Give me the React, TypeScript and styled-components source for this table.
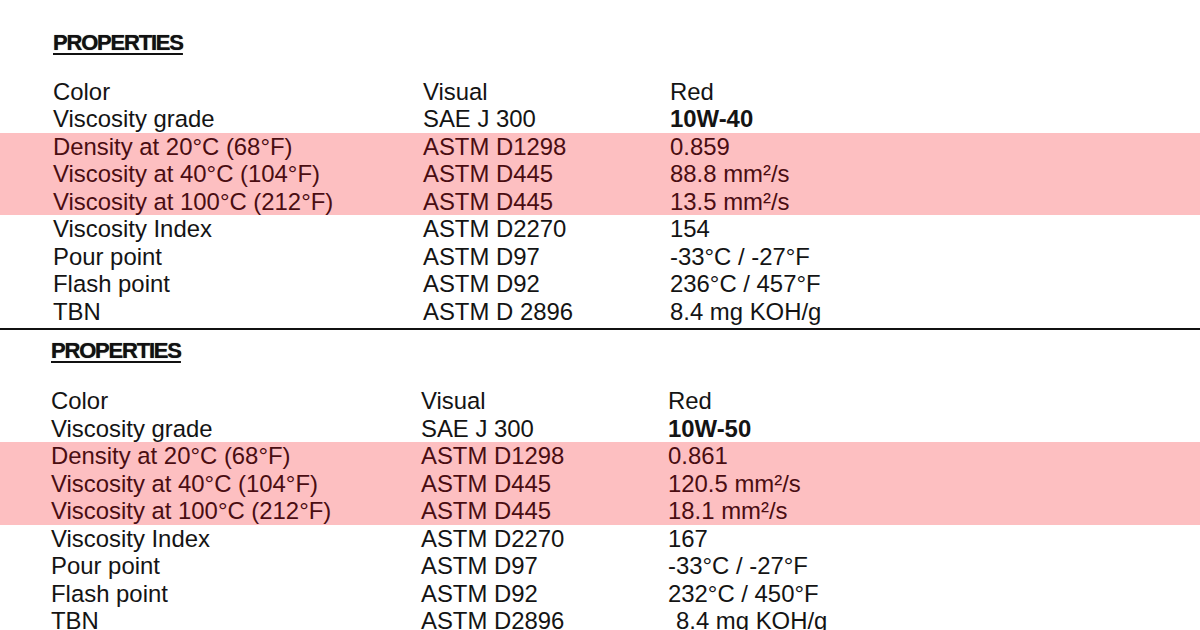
import React from "react";
import styled, { createGlobalStyle } from "styled-components";

const Global = createGlobalStyle`
  html, body { margin: 0; padding: 0; background: #ffffff; }
  body { overflow: hidden; font-family: "Liberation Sans", Arial, sans-serif; }
`;

const Page = styled.div`
  width: 1200px;
  height: 630px;
  overflow: hidden;
  background: #fff;
  display: flex;
  flex-direction: column;
`;

const Section = styled.section<{ $indent: number; $top: number; $gap: number }>`
  display: flex;
  flex-direction: column;
  padding-top: ${(p) => p.$top}px;
  --indent: ${(p) => p.$indent}px;
  --gap: ${(p) => p.$gap}px;
`;

const Heading = styled.h2`
  margin: 0 0 var(--gap) var(--indent);
  font-family: "Liberation Sans", Arial, sans-serif;
  font-weight: 700;
  font-size: 22px;
  line-height: 24px;
  letter-spacing: -1.2px;
  color: #111;
  text-decoration: underline;
  text-decoration-thickness: 2px;
  text-underline-offset: 3px;
  text-shadow: 0 0 0.8px rgba(0, 0, 0, 0.7);
`;

const Row = styled.div<{ $highlight?: boolean }>`
  display: grid;
  grid-template-columns: 370px 247px 1fr;
  padding-left: var(--indent);
  height: 27.5px;
  font-size: 23.9px;
  line-height: 27.5px;
  white-space: nowrap;
  background: ${(p) => (p.$highlight ? "#fdbfc1" : "transparent")};
  color: ${(p) => (p.$highlight ? "#4a0d12" : "#141414")};
`;

const Cell = styled.span<{ $bold?: boolean; $shift?: number }>`
  font-weight: ${(p) => (p.$bold ? 700 : 400)};
  padding-left: ${(p) => p.$shift ?? 0}px;
`;

const Divider = styled.div`
  flex: 0 0 2px;
  margin-top: 3px;
  width: 100%;
  height: 2px;
  background: #111;
`;

type Item = {
  label: string;
  method: string;
  value: string;
  bold?: boolean;
  hl?: boolean;
  shift?: number;
};

const first: Item[] = [
  { label: "Color", method: "Visual", value: "Red" },
  { label: "Viscosity grade", method: "SAE J 300", value: "10W-40", bold: true },
  { label: "Density at 20°C (68°F)", method: "ASTM D1298", value: "0.859", hl: true },
  { label: "Viscosity at 40°C (104°F)", method: "ASTM D445", value: "88.8 mm²/s", hl: true },
  { label: "Viscosity at 100°C (212°F)", method: "ASTM D445", value: "13.5 mm²/s", hl: true },
  { label: "Viscosity Index", method: "ASTM D2270", value: "154" },
  { label: "Pour point", method: "ASTM D97", value: "-33°C / -27°F" },
  { label: "Flash point", method: "ASTM D92", value: "236°C / 457°F" },
  { label: "TBN", method: "ASTM D 2896", value: "8.4 mg KOH/g" },
];

const second: Item[] = [
  { label: "Color", method: "Visual", value: "Red" },
  { label: "Viscosity grade", method: "SAE J 300", value: "10W-50", bold: true },
  { label: "Density at 20°C (68°F)", method: "ASTM D1298", value: "0.861", hl: true },
  { label: "Viscosity at 40°C (104°F)", method: "ASTM D445", value: "120.5 mm²/s", hl: true },
  { label: "Viscosity at 100°C (212°F)", method: "ASTM D445", value: "18.1 mm²/s", hl: true },
  { label: "Viscosity Index", method: "ASTM D2270", value: "167" },
  { label: "Pour point", method: "ASTM D97", value: "-33°C / -27°F" },
  { label: "Flash point", method: "ASTM D92", value: "232°C / 450°F" },
  { label: "TBN", method: "ASTM D2896", value: "8.4 mg KOH/g", shift: 8 },
];

const Table: React.FC<{ items: Item[] }> = ({ items }) => (
  <>
    {items.map((it) => (
      <Row key={it.label} $highlight={it.hl}>
        <Cell>{it.label}</Cell>
        <Cell>{it.method}</Cell>
        <Cell $bold={it.bold} $shift={it.shift}>
          {it.value}
        </Cell>
      </Row>
    ))}
  </>
);

export default function App() {
  return (
    <Page>
      <Global />
      <Section $indent={53} $top={31} $gap={22.5}>
        <Heading>PROPERTIES</Heading>
        <Table items={first} />
      </Section>
      <Divider />
      <Section $indent={51} $top={8.5} $gap={24.5}>
        <Heading>PROPERTIES</Heading>
        <Table items={second} />
      </Section>
    </Page>
  );
}
